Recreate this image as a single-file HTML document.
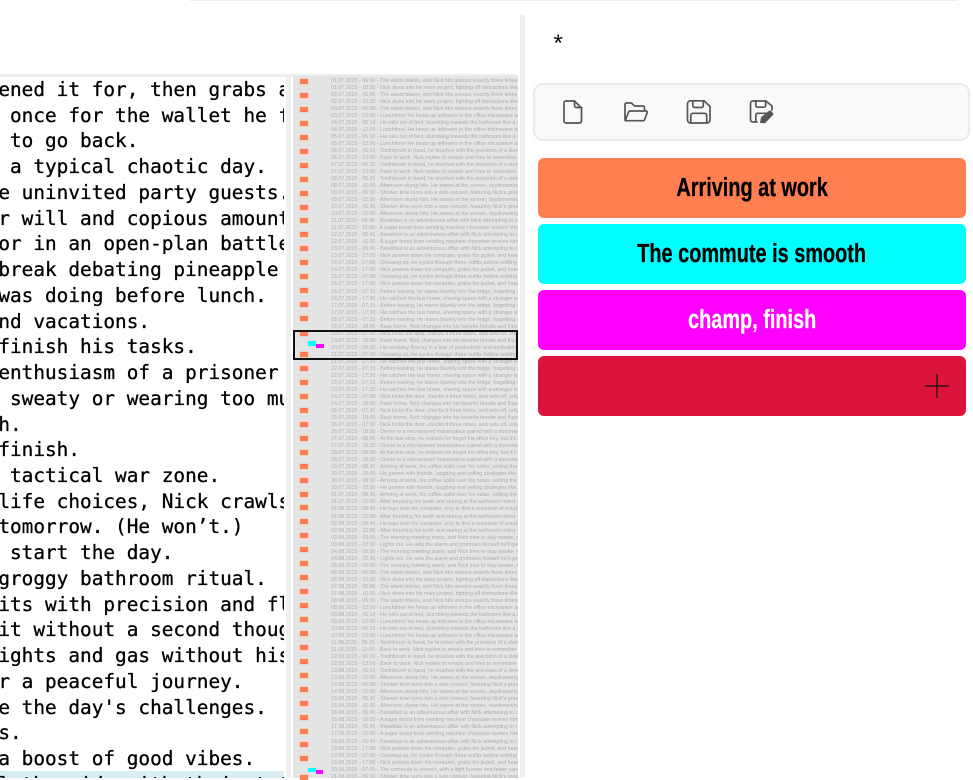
<!DOCTYPE html>
<html><head><meta charset="utf-8">
<style>
html,body{margin:0;padding:0;width:973px;height:778px;overflow:hidden;background:#fff;font-family:"Liberation Sans",sans-serif}
div{box-sizing:border-box}
.a{position:absolute}
#code{position:absolute;left:0;top:77px;width:284px;height:701px;overflow:hidden;font-family:"DejaVu Sans Mono","Liberation Mono",monospace;font-size:19.4px;line-height:25.74px;color:#000;-webkit-text-stroke:.3px #000}
#code div{height:25.74px;margin-left:-1.7px;white-space:pre}
#map{position:absolute;left:331px;top:78px;width:187px;height:700px;overflow:hidden;font-size:5.3px;line-height:7px;color:#adadad;white-space:nowrap}
#map div{height:7px}
.o{position:absolute;left:300px;width:8px;height:5px;background:#ff7f50;box-shadow:0 0 0 .5px rgba(255,127,80,.35)}
.btn{position:absolute;left:538px;width:428px;height:60px;border-radius:6px;text-align:center;font-weight:bold;font-size:25.5px;line-height:60px}
.btn span{display:inline-block;transform:scaleX(.78);-webkit-text-stroke:.3px currentColor}
</style></head><body>
<div class="a" style="left:190px;top:0;width:768px;height:1px;background:#eee"></div>
<div class="a" style="left:520px;top:15px;width:5px;height:763px;background:#f0f0f0"></div>
<div class="a" style="left:0;top:74px;width:518px;height:3px;background:#eee"></div>
<div class="a" style="left:286px;top:77px;width:5px;height:701px;background:#f0f0f0"></div>
<div class="a" style="left:293px;top:76px;width:225px;height:702px;background:#e4e4e4"></div>

<div class="a" style="left:0;top:771px;width:284px;height:7px;background:#d9edf2"></div>
<div id="code"><div>ened it for, then grabs a</div>
<div> once for the wallet he f</div>
<div> to go back.</div>
<div> a typical chaotic day.</div>
<div>e uninvited party guests.</div>
<div>r will and copious amount</div>
<div>or in an open-plan battle</div>
<div>break debating pineapple </div>
<div>was doing before lunch.</div>
<div>nd vacations.</div>
<div>finish his tasks.</div>
<div>enthusiasm of a prisoner </div>
<div> sweaty or wearing too mu</div>
<div>h.</div>
<div>finish.</div>
<div> tactical war zone.</div>
<div>life choices, Nick crawls</div>
<div>tomorrow. (He won’t.)</div>
<div> start the day.</div>
<div>groggy bathroom ritual.</div>
<div>its with precision and fl</div>
<div>it without a second thoug</div>
<div>ights and gas without his</div>
<div>r a peaceful journey.</div>
<div>e the day's challenges.</div>
<div>s.</div>
<div>a boost of good vibes.</div>
<div>l the ride with their t t</div></div>

<div id="map">
<div>01.07.2025 - 06:00 - The alarm blares, and Nick hits snooze exactly three times, then</div>
<div>01.07.2025 - 10:30 - Nick dives into his main project, fighting off distractions like a</div>
<div>02.07.2025 - 06:00 - The alarm blares, and Nick hits snooze exactly three times, then</div>
<div>02.07.2025 - 10:30 - Nick dives into his main project, fighting off distractions like a</div>
<div>03.07.2025 - 06:00 - The alarm blares, and Nick hits snooze exactly three times, then</div>
<div>03.07.2025 - 12:00 - Lunchtime! He heats up leftovers in the office microwave and</div>
<div>04.07.2025 - 06:18 - He rolls out of bed, stumbling towards the bathroom like a zombie</div>
<div>04.07.2025 - 12:00 - Lunchtime! He heats up leftovers in the office microwave and</div>
<div>05.07.2025 - 06:18 - He rolls out of bed, stumbling towards the bathroom like a zombie</div>
<div>05.07.2025 - 12:00 - Lunchtime! He heats up leftovers in the office microwave and</div>
<div>06.07.2025 - 06:20 - Toothbrush in hand, he brushes with the precision of a sleepy</div>
<div>06.07.2025 - 13:00 - Back to work. Nick replies to emails and tries to remember what</div>
<div>07.07.2025 - 06:20 - Toothbrush in hand, he brushes with the precision of a sleepy</div>
<div>07.07.2025 - 13:00 - Back to work. Nick replies to emails and tries to remember what</div>
<div>08.07.2025 - 06:20 - Toothbrush in hand, he brushes with the precision of a sleepy</div>
<div>08.07.2025 - 15:00 - Afternoon slump hits. He stares at the screen, daydreaming of</div>
<div>09.07.2025 - 06:30 - Shower time turns into a solo concert, featuring Nick's greatest</div>
<div>09.07.2025 - 15:00 - Afternoon slump hits. He stares at the screen, daydreaming of</div>
<div>10.07.2025 - 06:30 - Shower time turns into a solo concert, featuring Nick's greatest</div>
<div>10.07.2025 - 15:00 - Afternoon slump hits. He stares at the screen, daydreaming of</div>
<div>11.07.2025 - 06:45 - Breakfast is an adventurous affair with Nick attempting to cook</div>
<div>11.07.2025 - 16:00 - A sugar boost from vending machine chocolate revives him for</div>
<div>12.07.2025 - 06:45 - Breakfast is an adventurous affair with Nick attempting to cook</div>
<div>12.07.2025 - 16:00 - A sugar boost from vending machine chocolate revives him for</div>
<div>13.07.2025 - 06:45 - Breakfast is an adventurous affair with Nick attempting to cook</div>
<div>13.07.2025 - 17:00 - Nick powers down his computer, grabs his jacket, and heads out</div>
<div>14.07.2025 - 07:00 - Dressing up, he cycles through three outfits before settling on</div>
<div>14.07.2025 - 17:00 - Nick powers down his computer, grabs his jacket, and heads out</div>
<div>15.07.2025 - 07:00 - Dressing up, he cycles through three outfits before settling on</div>
<div>15.07.2025 - 17:00 - Nick powers down his computer, grabs his jacket, and heads out</div>
<div style="margin-top:1px">16.07.2025 - 07:15 - Before leaving, he stares blankly into the fridge, forgetting what</div>
<div>16.07.2025 - 17:30 - He catches the bus home, sharing space with a stranger who</div>
<div>17.07.2025 - 07:15 - Before leaving, he stares blankly into the fridge, forgetting what</div>
<div>17.07.2025 - 17:30 - He catches the bus home, sharing space with a stranger who</div>
<div>18.07.2025 - 07:15 - Before leaving, he stares blankly into the fridge, forgetting what</div>
<div>18.07.2025 - 18:00 - Back home, Nick changes into his favorite hoodie and flops on</div>
<div>19.07.2025 - 07:30 - Nick locks the door, checks it three times, and sets off, only to</div>
<div>19.07.2025 - 18:00 - Back home, Nick changes into his favorite hoodie and flops on</div>
<div>20.07.2025 - 08:30 - His workday flies by in a blur of productivity and motivation and</div>
<div>21.07.2025 - 07:00 - Dressing up, he cycles through three outfits before settling on</div>
<div>21.07.2025 - 17:30 - He catches the bus home, sharing space with a stranger who</div>
<div>22.07.2025 - 07:15 - Before leaving, he stares blankly into the fridge, forgetting what</div>
<div>22.07.2025 - 17:30 - He catches the bus home, sharing space with a stranger who</div>
<div>23.07.2025 - 07:15 - Before leaving, he stares blankly into the fridge, forgetting what</div>
<div>23.07.2025 - 17:30 - He catches the bus home, sharing space with a stranger who</div>
<div>24.07.2025 - 07:30 - Nick locks the door, checks it three times, and sets off, only to</div>
<div>24.07.2025 - 18:00 - Back home, Nick changes into his favorite hoodie and flops on</div>
<div>25.07.2025 - 07:30 - Nick locks the door, checks it three times, and sets off, only to</div>
<div>25.07.2025 - 18:00 - Back home, Nick changes into his favorite hoodie and flops on</div>
<div>26.07.2025 - 07:30 - Nick locks the door, checks it three times, and sets off, only to</div>
<div>26.07.2025 - 18:30 - Dinner is a microwaved masterpiece paired with a documentary</div>
<div>27.07.2025 - 08:00 - At the bus stop, he realizes he forgot his office key, but it's too</div>
<div>27.07.2025 - 18:30 - Dinner is a microwaved masterpiece paired with a documentary</div>
<div>28.07.2025 - 08:00 - At the bus stop, he realizes he forgot his office key, but it's too</div>
<div>28.07.2025 - 18:30 - Dinner is a microwaved masterpiece paired with a documentary</div>
<div>29.07.2025 - 08:30 - Arriving at work, his coffee spills over his notes, setting the tone</div>
<div>29.07.2025 - 20:00 - He games with friends, laughing and yelling strategies like a</div>
<div>30.07.2025 - 08:30 - Arriving at work, his coffee spills over his notes, setting the tone</div>
<div>30.07.2025 - 20:00 - He games with friends, laughing and yelling strategies like a</div>
<div>31.07.2025 - 08:30 - Arriving at work, his coffee spills over his notes, setting the tone</div>
<div>31.07.2025 - 22:00 - After brushing his teeth and staring at the bathroom mirror for</div>
<div>01.08.2025 - 08:45 - He logs onto his computer, only to find a mountain of emails</div>
<div style="margin-top:1px">01.08.2025 - 22:00 - After brushing his teeth and staring at the bathroom mirror for</div>
<div>02.08.2025 - 08:45 - He logs onto his computer, only to find a mountain of emails</div>
<div>02.08.2025 - 22:00 - After brushing his teeth and staring at the bathroom mirror for</div>
<div>03.08.2025 - 09:00 - The morning meeting starts, and Nick tries to stay awake, nodding</div>
<div>03.08.2025 - 22:30 - Lights out. He sets the alarm and promises himself he'll get up</div>
<div>04.08.2025 - 09:00 - The morning meeting starts, and Nick tries to stay awake, nodding</div>
<div>04.08.2025 - 22:30 - Lights out. He sets the alarm and promises himself he'll get up</div>
<div>05.08.2025 - 09:00 - The morning meeting starts, and Nick tries to stay awake, nodding</div>
<div>06.08.2025 - 06:00 - The alarm blares, and Nick hits snooze exactly three times, then</div>
<div>06.08.2025 - 10:30 - Nick dives into his main project, fighting off distractions like a</div>
<div>07.08.2025 - 06:00 - The alarm blares, and Nick hits snooze exactly three times, then</div>
<div>07.08.2025 - 10:30 - Nick dives into his main project, fighting off distractions like a</div>
<div>08.08.2025 - 06:00 - The alarm blares, and Nick hits snooze exactly three times, then</div>
<div>08.08.2025 - 12:00 - Lunchtime! He heats up leftovers in the office microwave and</div>
<div>09.08.2025 - 06:18 - He rolls out of bed, stumbling towards the bathroom like a zombie</div>
<div>09.08.2025 - 12:00 - Lunchtime! He heats up leftovers in the office microwave and</div>
<div>10.08.2025 - 06:18 - He rolls out of bed, stumbling towards the bathroom like a zombie</div>
<div>10.08.2025 - 12:00 - Lunchtime! He heats up leftovers in the office microwave and</div>
<div>11.08.2025 - 06:20 - Toothbrush in hand, he brushes with the precision of a sleepy</div>
<div>11.08.2025 - 13:00 - Back to work. Nick replies to emails and tries to remember what</div>
<div>12.08.2025 - 06:20 - Toothbrush in hand, he brushes with the precision of a sleepy</div>
<div>12.08.2025 - 13:00 - Back to work. Nick replies to emails and tries to remember what</div>
<div>13.08.2025 - 06:20 - Toothbrush in hand, he brushes with the precision of a sleepy</div>
<div>13.08.2025 - 15:00 - Afternoon slump hits. He stares at the screen, daydreaming of</div>
<div>14.08.2025 - 06:30 - Shower time turns into a solo concert, featuring Nick's greatest</div>
<div>14.08.2025 - 15:00 - Afternoon slump hits. He stares at the screen, daydreaming of</div>
<div>15.08.2025 - 06:30 - Shower time turns into a solo concert, featuring Nick's greatest</div>
<div>15.08.2025 - 15:00 - Afternoon slump hits. He stares at the screen, daydreaming of</div>
<div>16.08.2025 - 06:45 - Breakfast is an adventurous affair with Nick attempting to cook</div>
<div>16.08.2025 - 16:00 - A sugar boost from vending machine chocolate revives him for</div>
<div>17.08.2025 - 06:45 - Breakfast is an adventurous affair with Nick attempting to cook</div>
<div>17.08.2025 - 16:00 - A sugar boost from vending machine chocolate revives him for</div>
<div style="margin-top:1px">18.08.2025 - 06:45 - Breakfast is an adventurous affair with Nick attempting to cook</div>
<div>18.08.2025 - 17:00 - Nick powers down his computer, grabs his jacket, and heads out</div>
<div>19.08.2025 - 07:00 - Dressing up, he cycles through three outfits before settling on</div>
<div>19.08.2025 - 17:00 - Nick powers down his computer, grabs his jacket, and heads out</div>
<div>20.08.2025 - 07:05 - The commute is smooth, with a light breeze and fewer cars on</div>
<div>21.08.2025 - 06:30 - Shower time turns into a solo concert, featuring Nick's greatest</div>
</div>

<div class="o" style="top:79px"></div><div class="o" style="top:93px"></div><div class="o" style="top:107px"></div><div class="o" style="top:121px"></div><div class="o" style="top:135px"></div><div class="o" style="top:149px"></div><div class="o" style="top:163px"></div><div class="o" style="top:177px"></div><div class="o" style="top:191px"></div><div class="o" style="top:205px"></div><div class="o" style="top:218px"></div><div class="o" style="top:232px"></div><div class="o" style="top:246px"></div><div class="o" style="top:260px"></div><div class="o" style="top:274px"></div><div class="o" style="top:288px"></div><div class="o" style="top:302px"></div><div class="o" style="top:316px"></div><div class="o" style="top:331px"></div><div class="o" style="top:352px"></div><div class="o" style="top:366px"></div><div class="o" style="top:380px"></div><div class="o" style="top:394px"></div><div class="o" style="top:408px"></div><div class="o" style="top:422px"></div><div class="o" style="top:436px"></div><div class="o" style="top:450px"></div><div class="o" style="top:464px"></div><div class="o" style="top:478px"></div><div class="o" style="top:492px"></div><div class="o" style="top:505px"></div><div class="o" style="top:519px"></div><div class="o" style="top:533px"></div><div class="o" style="top:547px"></div><div class="o" style="top:561px"></div><div class="o" style="top:575px"></div><div class="o" style="top:589px"></div><div class="o" style="top:603px"></div><div class="o" style="top:617px"></div><div class="o" style="top:631px"></div><div class="o" style="top:645px"></div><div class="o" style="top:659px"></div><div class="o" style="top:673px"></div><div class="o" style="top:687px"></div><div class="o" style="top:701px"></div><div class="o" style="top:715px"></div><div class="o" style="top:729px"></div><div class="o" style="top:742px"></div><div class="o" style="top:756px"></div><div class="o" style="top:775px"></div>

<div class="a" style="left:308px;top:341px;width:8px;height:5px;background:#0ff"></div>
<div class="a" style="left:316px;top:344px;width:8px;height:4px;background:#f0f"></div>
<div class="a" style="left:308px;top:768px;width:8px;height:4px;background:#0ff"></div>
<div class="a" style="left:316px;top:770px;width:7px;height:4px;background:#f0f"></div>
<div class="a" style="left:293px;top:330px;width:225px;height:30px;border:2px solid #111"></div>

<div class="a" style="left:551px;top:35px;font-size:24px;line-height:24px;color:#000;font-family:'Liberation Mono',monospace">*</div>

<div class="a" style="left:533px;top:83px;width:437px;height:58px;border:2px solid #ececec;border-radius:10px;background:#f9f9f9"></div>
<svg class="a" style="left:0;top:0" width="973" height="778" viewBox="0 0 973 778" fill="none" stroke="#555" stroke-width="1.7" stroke-linejoin="round" stroke-linecap="round">
<path d="M566 101H574.5L581.5 108V121A2 2 0 0 1 579.5 123H566A2 2 0 0 1 564 121V103A2 2 0 0 1 566 101Z"/>
<path d="M574.5 101V105.5A2 2 0 0 0 576.5 107.5H581.5"/>
<path d="M625 120V104.5A1.5 1.5 0 0 1 626.5 103H631.5L634.5 106H643A1.5 1.5 0 0 1 644.5 107.5V110.5"/>
<path d="M625.3 120.5L628.6 112A1.5 1.5 0 0 1 630 111H646A1.2 1.2 0 0 1 647.2 112.5L644.6 119.6A1.5 1.5 0 0 1 643.2 120.7H626.5A1.2 1.2 0 0 1 625.3 120.5Z"/>
<path d="M690.5 100.8H704L710 106.5V119.8A3.2 3.2 0 0 1 706.8 123H690.5A3 3 0 0 1 687.5 120V103.8A3 3 0 0 1 690.5 100.8Z"/>
<path d="M692.8 101V105.5A2 2 0 0 0 694.8 107.5H701.3A2 2 0 0 0 703.3 105.5V101"/>
<path d="M690.8 123V115.3A2 2 0 0 1 692.8 113.3H704.7A2 2 0 0 1 706.7 115.3V123"/>
<path d="M757 122H753A2.5 2.5 0 0 1 750.5 119.5V103.5A2.5 2.5 0 0 1 753 101H766L772 106V110"/>
<path d="M755.8 101V105.5A1.7 1.7 0 0 0 757.5 107.2H764A1.7 1.7 0 0 0 765.7 105.5V101"/>
<path d="M755.8 121.7V115A1.7 1.7 0 0 1 757.5 113.3H766.7"/>
<path d="M760 123L761 117.3L769 110.8A1.5 1.5 0 0 1 771 111L773 113A1.5 1.5 0 0 1 773 115L765 123.2Z" fill="#555" stroke="none"/>
</svg>

<div class="btn" style="top:158px;background:#ff7f50;color:#000"><span>Arriving at work</span></div>
<div class="btn" style="top:224px;background:#0ff;color:#000"><span>The commute is smooth</span></div>
<div class="btn" style="top:290px;background:#f0f;color:#fff"><span>champ, finish</span></div>
<div class="btn" style="top:356px;background:#dc143c"></div>
<svg class="a" style="left:925px;top:374px" width="24" height="24" viewBox="0 0 24 24"><path d="M12 0V24M0 12H24" stroke="#111" stroke-width="1.2" fill="none"/></svg>
</body></html>
